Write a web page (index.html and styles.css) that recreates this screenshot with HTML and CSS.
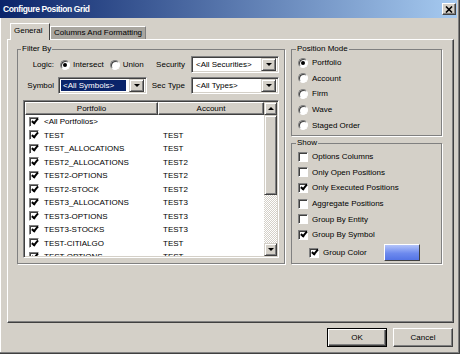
FILE: index.html
```html
<!DOCTYPE html>
<html lang="en">
<head>
    <meta charset="UTF-8">
    <title>Configure Position Grid</title>
    <link rel="stylesheet" href="styles.css">
</head>
<body>
    <!-- dialog window -->
    <div class="window">
        <div class="titlebar">
            <span class="title">Configure Position Grid</span>
            <span class="close">
                <svg width="8" height="7" viewBox="0 0 8 7"><path d="M1 0.5 L7 6.5 M7 0.5 L1 6.5" stroke="#000" stroke-width="1.6"/></svg>
            </span>
        </div>

        <div class="client">
            <!-- tabs -->
            <div class="tabs">
                <div class="tab active">General</div>
                <div class="tab">Columns And Formatting</div>
            </div>

            <div class="panel">
                <div class="panel-body">
                    <!-- Filter By -->
                    <fieldset class="group filter">
                        <legend>Filter By</legend>
                        <div class="filter-grid">
                            <span class="lbl">Logic:</span>
                            <div class="radios">
                                <span class="radio on"></span><span class="rtext">Intersect</span>
                                <span class="radio second"></span><span class="rtext">Union</span>
                            </div>
                            <span class="lbl lbl2">Security</span>
                            <div class="combo"><span class="combo-text">&lt;All Securities&gt;</span><span class="drop"></span></div>

                            <span class="lbl">Symbol</span>
                            <div class="combo"><span class="combo-text selected">&lt;All Symbols&gt;</span><span class="drop"></span></div>
                            <span class="lbl lbl2">Sec Type</span>
                            <div class="combo"><span class="combo-text">&lt;All Types&gt;</span><span class="drop"></span></div>
                        </div>

                        <div class="list">
                            <div class="list-main">
                                <div class="list-head">
                                    <div class="hcell">Portfolio</div>
                                    <div class="hcell">Account</div>
                                </div>
                                <div class="row"><div class="port"><span class="check on"></span><span class="ptext">&lt;All Portfolios&gt;</span></div><div class="acct"></div></div>
                                <div class="row"><div class="port"><span class="check on"></span><span class="ptext">TEST</span></div><div class="acct">TEST</div></div>
                                <div class="row"><div class="port"><span class="check on"></span><span class="ptext">TEST_ALLOCATIONS</span></div><div class="acct">TEST</div></div>
                                <div class="row"><div class="port"><span class="check on"></span><span class="ptext">TEST2_ALLOCATIONS</span></div><div class="acct">TEST2</div></div>
                                <div class="row"><div class="port"><span class="check on"></span><span class="ptext">TEST2-OPTIONS</span></div><div class="acct">TEST2</div></div>
                                <div class="row"><div class="port"><span class="check on"></span><span class="ptext">TEST2-STOCK</span></div><div class="acct">TEST2</div></div>
                                <div class="row"><div class="port"><span class="check on"></span><span class="ptext">TEST3_ALLOCATIONS</span></div><div class="acct">TEST3</div></div>
                                <div class="row"><div class="port"><span class="check on"></span><span class="ptext">TEST3-OPTIONS</span></div><div class="acct">TEST3</div></div>
                                <div class="row"><div class="port"><span class="check on"></span><span class="ptext">TEST3-STOCKS</span></div><div class="acct">TEST3</div></div>
                                <div class="row"><div class="port"><span class="check on"></span><span class="ptext">TEST-CITIALGO</span></div><div class="acct">TEST</div></div>
                                <div class="row"><div class="port"><span class="check on"></span><span class="ptext">TEST-OPTIONS</span></div><div class="acct">TEST</div></div>
                            </div>
                            <div class="vscroll">
                                <div class="sbtn"><span class="up"></span></div>
                                <div class="thumb"></div>
                                <div class="track"></div>
                                <div class="sbtn"><span class="down"></span></div>
                            </div>
                        </div>
                    </fieldset>

                    <div class="side">
                        <!-- Position Mode -->
                        <fieldset class="group mode">
                            <legend>Position Mode</legend>
                            <div class="opt"><span class="radio on"></span><span class="otext">Portfolio</span></div>
                            <div class="opt"><span class="radio"></span><span class="otext">Account</span></div>
                            <div class="opt"><span class="radio"></span><span class="otext">Firm</span></div>
                            <div class="opt"><span class="radio"></span><span class="otext">Wave</span></div>
                            <div class="opt"><span class="radio"></span><span class="otext">Staged Order</span></div>
                        </fieldset>

                        <!-- Show -->
                        <fieldset class="group show">
                            <legend>Show</legend>
                            <div class="opt"><span class="check"></span><span class="otext">Options Columns</span></div>
                            <div class="opt"><span class="check"></span><span class="otext">Only Open Positions</span></div>
                            <div class="opt"><span class="check on"></span><span class="otext">Only Executed Positions</span></div>
                            <div class="opt"><span class="check"></span><span class="otext">Aggregate Positions</span></div>
                            <div class="opt"><span class="check"></span><span class="otext">Group By Entity</span></div>
                            <div class="opt"><span class="check on"></span><span class="otext">Group By Symbol</span></div>
                            <div class="opt gc-row"><span class="check on"></span><span class="otext gc-text">Group Color</span><span class="swatch"></span></div>
                        </fieldset>
                    </div>
                </div>
            </div>

            <div class="buttons">
                <div class="btn default">OK</div>
                <div class="btn">Cancel</div>
            </div>
        </div>
    </div>
</body>
</html>
```

FILE: styles.css
```css
/* reset */
*{
    margin: 0;
    padding: 0;
    box-sizing: border-box;
}

body{
    font-family: "Liberation Sans", Arial, sans-serif;
    font-size: 8px;
    color: #000;
    background: #d4d0c8;
}

/* window frame */
.window{
    width: 460px;
    height: 354px;
    background: #d4d0c8;
    border-right: 1px solid #404040;
    border-bottom: 1px solid #404040;
    box-shadow: inset -1px -1px 0 #808080, inset 1px 0 0 #fff;
}

.titlebar{
    height: 18px;
    margin-right: 2px;
    padding: 0 1px 0 3px;
    display: flex;
    align-items: center;
    justify-content: space-between;
    background: linear-gradient(to right, #0a246a, #a6caf0);
}

.title{
    color: #fff;
    font-weight: bold;
    font-size: 8.5px;
    letter-spacing: -0.4px;
}

.close{
    width: 14px;
    height: 12px;
    display: flex;
    align-items: center;
    justify-content: center;
    background: #d4d0c8;
    border: 1px solid;
    border-color: #fff #404040 #404040 #fff;
    box-shadow: inset -1px -1px 0 #808080;
}

.client{
    padding: 5px 0 0 7px;
}

/* tabs */
.tabs{
    height: 16px;
    padding-left: 3px;
    display: flex;
    align-items: flex-end;
}

.tab{
    height: 13px;
    padding: 0 3px;
    line-height: 11px;
    background: #a9a69f;
    border: 1px solid;
    border-bottom: none;
    border-color: #fff #808080 transparent #fff;
}

.tab.active{
    width: 40px;
    height: 17px;
    margin-bottom: -1px;
    line-height: 14px;
    background: #d4d0c8;
    border-color: #fff #404040 transparent #fff;
    position: relative;/* sits over the panel top line */
    z-index: 1;
}

.panel{
    width: 447px;
    height: 284px;
    padding: 4px 0 0 9px;
    border: 1px solid;
    border-color: #fff #404040 #404040 #fff;
    box-shadow: inset -1px -1px 0 #808080;
}

.panel-body{
    height: 220px;
    display: flex;
    gap: 6px;
}

/* group boxes */
.group{
    border: 1px solid #808080;
    box-shadow: 1px 1px 0 #fff;
}

.group legend{
    margin-left: -2px;
    padding: 0 1px;
    line-height: 10px;
}

.filter{
    width: 268px;
    height: 220px;
    padding: 2px 5px 5px 5px;
    display: flex;
    flex-direction: column;
}

.filter-grid{
    display: grid;
    grid-template-columns: 31px 89px 36px 88px;
    grid-auto-rows: 17px;
    column-gap: 4px;
    row-gap: 4px;
    align-items: center;
}

.lbl{
    text-align: right;
}

.lbl2{
    padding-right: 2px;
}

.radios{
    padding-left: 2px;
    display: flex;
    align-items: center;
}

.rtext{
    margin-left: 3px;
}

.radio.second{
    margin-left: 6px;
}

.radio{
    width: 10px;
    height: 10px;
    flex: none;
    display: grid;
    place-items: center;
    border-radius: 50%;
    background: #fff;
    border: 1px solid;
    border-color: #808080 #fff #fff #808080;
    box-shadow: inset 1px 1px 0 #404040;
}

.radio.on::after{
    content: "";
    width: 4px;
    height: 4px;
    border-radius: 50%;
    background: #000;
}

.check{
    width: 10px;
    height: 10px;
    flex: none;
    display: grid;
    place-items: center;
    background: #fff;
    border: 1px solid;
    border-color: #808080 #fff #fff #808080;
    box-shadow: inset 1px 1px 0 #404040;
}

.check.on::after{
    content: "";
    width: 2px;
    height: 5px;
    margin: -2px 0 0 1px;
    border: solid #000;
    border-width: 0 2px 2px 0;
    transform: rotate(40deg);
}

/* combo boxes */
.combo{
    height: 17px;
    padding: 2px;
    display: flex;
    align-items: center;
    background: #fff;
    border: 1px solid;
    border-color: #808080 #fff #fff #808080;
    box-shadow: inset 1px 1px 0 #404040, inset -1px -1px 0 #d4d0c8;
}

.combo-text{
    flex: 1;
    height: 11px;
    padding-left: 2px;
    line-height: 11px;
    white-space: nowrap;
    overflow: hidden;
}

.combo-text.selected{
    margin-right: 3px;
    background: #0a246a;
    color: #fff;
}

.drop{
    width: 15px;
    height: 13px;
    flex: none;
    display: grid;
    place-items: center;
    background: #d4d0c8;
    border: 1px solid;
    border-color: #d4d0c8 #404040 #404040 #d4d0c8;
    box-shadow: inset 1px 1px 0 #fff, inset -1px -1px 0 #808080;
}

.drop::after,
.down{
    content: "";
    width: 0;
    height: 0;
    border-left: 3px solid transparent;
    border-right: 3px solid transparent;
    border-top: 3px solid #000;
}

.up{
    width: 0;
    height: 0;
    border-left: 3px solid transparent;
    border-right: 3px solid transparent;
    border-bottom: 3px solid #000;
}

/* portfolio list */
.list{
    flex: 1;
    margin-top: 6px;
    padding: 1px;
    display: flex;
    overflow: hidden;
    background: #fff;
    border: 1px solid;
    border-color: #808080 #fff #fff #808080;
    box-shadow: inset 1px 1px 0 #404040, inset -1px -1px 0 #d4d0c8;
}

.list-main{
    flex: 1;
    overflow: hidden;
}

.list-head{
    height: 13px;
    display: grid;
    grid-template-columns: 133px 1fr;
}

.hcell{
    text-align: center;
    line-height: 11px;
    background: #d4d0c8;
    border: 1px solid;
    border-color: #fff #404040 #404040 #fff;
    box-shadow: inset -1px -1px 0 #808080;
}

.row{
    height: 13.5px;
    display: grid;
    grid-template-columns: 133px 1fr;
    align-items: center;
}

.port{
    padding-left: 4px;
    display: flex;
    align-items: center;
}

.ptext{
    margin-left: 5px;
}

.acct{
    padding-left: 5px;
}

.vscroll{
    width: 13px;
    display: flex;
    flex-direction: column;
}

.sbtn,
.thumb{
    background: #d4d0c8;
    border: 1px solid;
    border-color: #d4d0c8 #404040 #404040 #d4d0c8;
    box-shadow: inset 1px 1px 0 #fff, inset -1px -1px 0 #808080;
}

.sbtn{
    height: 13px;
    display: grid;
    place-items: center;
}

.thumb{
    height: 80px;
}

.track{
    flex: 1;
    background: repeating-conic-gradient(#fff 0 25%, #d4d0c8 0 50%) 0 0 / 2px 2px;
}

/* right column */
.side{
    width: 151px;
    display: flex;
    flex-direction: column;
    gap: 2px;
}

.mode{
    height: 92px;
    padding: 1px 6px 0 6px;
}

.show{
    flex: 1;
    padding: 1px 6px 0 6px;
}

.opt{
    height: 15.6px;
    display: flex;
    align-items: center;
}

.otext{
    margin-left: 4px;
}

.gc-row{
    height: 18px;
    margin-top: 1px;
    padding-left: 11px;
}

.gc-text{
    width: 61px;
}

.swatch{
    width: 36px;
    height: 17px;
    background: linear-gradient(#b4c4fa, #6d8aee 55%, #5474e6);
    border: 1px solid;
    border-color: #fff #404040 #404040 #fff;
}

/* OK / Cancel */
.buttons{
    width: 446px;
    margin-top: 5px;
    display: flex;
    justify-content: flex-end;
    gap: 6px;
}

.btn{
    width: 60px;
    height: 19px;
    line-height: 17px;
    text-align: center;
    background: #d4d0c8;
    border: 1px solid;
    border-color: #fff #404040 #404040 #fff;
    box-shadow: inset -1px -1px 0 #808080;
}

.btn.default{
    border-color: #000;
    box-shadow: inset 1px 1px 0 #fff, inset -1px -1px 0 #404040, inset -2px -2px 0 #808080;
}
```
